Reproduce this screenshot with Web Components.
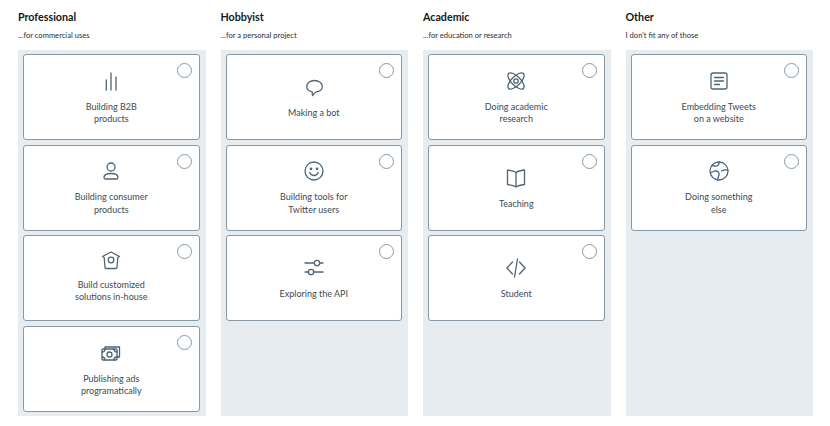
<!DOCTYPE html>
<html>
<head>
<meta charset="utf-8">
<title>Use cases</title>
<style>
  body { margin: 0; background: #fff; font-family: Lato, sans-serif; }
</style>
</head>
<body>
<template id="usecase-board-tpl">
  <style>
    :host { display: flex; gap: 15px; padding: 0 0 0 18px; width: 830px; height: 426px; box-sizing: border-box; }
  </style>
  <slot></slot>
</template>

<template id="usecase-column-tpl">
  <style>
    :host { display: flex; flex-direction: column; width: 187.5px; color: #14171a; }
    h2 { margin: 10px 0 0; font: 700 10.7px/14px Lato, sans-serif; color: #14171a; }
    p { margin: 5px 0 0; height: 21px; font: 400 7.6px/12px Lato, sans-serif; color: #292f33; }
    .panel { display: flex; flex-direction: column; gap: 4.67px; height: 366px; box-sizing: border-box; padding: 4px 6px 0 5px; background: #e6ecf0; }
  </style>
  <h2></h2>
  <p></p>
  <div class="panel"><slot></slot></div>
</template>

<template id="usecase-card-tpl">
  <style>
    :host { display: flex; flex-direction: column; align-items: center; justify-content: center; position: relative; height: 86px; box-sizing: border-box; padding-top: 1.5px; background: #fff; border: 1px solid #8899a6; border-radius: 3px; }
    :host([compact]) { padding-top: 0; padding-bottom: 4px; }
    :host([compact]) .label { margin-top: 7.5px; }
    .radio { position: absolute; top: 8px; right: 7px; width: 15px; height: 15px; box-sizing: border-box; border: 1px solid #8899a6; border-radius: 50%; background: #fff; }
    .icon { height: 22px; display: flex; align-items: center; justify-content: center; }
    .label { margin-top: 9px; font: 400 9px/12.5px Lato, sans-serif; color: #3d4a54; text-align: center; }
  </style>
  <span class="radio"></span>
  <div class="icon"><slot name="icon"></slot></div>
  <div class="label"><slot></slot></div>
</template>

<template id="usecase-icon-tpl">
  <style>
    :host { display: block; width: 22px; height: 22px; }
    svg { display: block; width: 22px; height: 22px; fill: none; stroke: #4f6475; stroke-width: 1.3; stroke-linecap: round; stroke-linejoin: round; }
  </style>
  <svg viewBox="0 0 22 22"></svg>
</template>

<usecase-board>
  <usecase-column heading="Professional" sub="...for commercial uses">
    <usecase-card><usecase-icon slot="icon" name="bars"></usecase-icon>Building B2B<br>products</usecase-card>
    <usecase-card><usecase-icon slot="icon" name="person"></usecase-icon>Building consumer<br>products</usecase-card>
    <usecase-card compact><usecase-icon slot="icon" name="house"></usecase-icon>Build customized<br>solutions in-house</usecase-card>
    <usecase-card><usecase-icon slot="icon" name="money"></usecase-icon>Publishing ads<br>programatically</usecase-card>
  </usecase-column>
  <usecase-column heading="Hobbyist" sub="...for a personal project">
    <usecase-card><usecase-icon slot="icon" name="bubble"></usecase-icon>Making a bot</usecase-card>
    <usecase-card><usecase-icon slot="icon" name="smile"></usecase-icon>Building tools for<br>Twitter users</usecase-card>
    <usecase-card><usecase-icon slot="icon" name="sliders"></usecase-icon>Exploring the API</usecase-card>
  </usecase-column>
  <usecase-column heading="Academic" sub="...for education or research">
    <usecase-card><usecase-icon slot="icon" name="atom"></usecase-icon>Doing academic<br>research</usecase-card>
    <usecase-card><usecase-icon slot="icon" name="book"></usecase-icon>Teaching</usecase-card>
    <usecase-card><usecase-icon slot="icon" name="code"></usecase-icon>Student</usecase-card>
  </usecase-column>
  <usecase-column heading="Other" sub="I don't fit any of those">
    <usecase-card><usecase-icon slot="icon" name="doc"></usecase-icon>Embedding Tweets<br>on a website</usecase-card>
    <usecase-card><usecase-icon slot="icon" name="globe"></usecase-icon>Doing something<br>else</usecase-card>
  </usecase-column>
</usecase-board>

<script>
const ICONS = {
  bars: '<path d="M6.300 10v10M11 3v17M16 7v13"/>',
  person: '<circle cx="11" cy="7" r="4"/><path d="M4 17.500c0-2.500 3-4 7-4s7 1.500 7 4c0 1-.8 1.500-1.500 1.500h-11C4.800 19 4 18.500 4 17.500z"/>',
  house: '<path d="M11 3 19.500 7.500 17.800 8.500 17 18.500c0 .6-.5 1-1 1H6c-.5 0-1-.4-1-1L4.200 8.500 2.500 7.500z"/><circle cx="11" cy="11" r="2.800"/>',
  money: '<rect x="2" y="7" width="15" height="11" rx="1"/><path d="M5 7V5h14.500v10H17"/><circle cx="9.500" cy="12.500" r="2.500"/><path d="M2 10c1.500 0 3-1 3-3M14 7c0 2 1.500 3 3 3M2 15c1.500 0 3 1 3 3M14 18c0-2 1.500-3 3-3"/>',
  bubble: '<path d="M11.500 4.500c4.500 0 7.800 2.500 7.800 5.800 0 3.200-2.800 5.300-6 5.600-1.200.3-2.600 2.200-3.800 3.600-.2-1.200-.3-2.500-.3-3.700-3.200-.6-5.500-2.800-5.500-5.500 0-3.300 3.300-5.800 7.800-5.800z"/>',
  smile: '<circle cx="11" cy="11" r="9"/><circle cx="8" cy="8.800" r=".7"/><circle cx="14" cy="8.800" r=".7"/><path d="M6.800 12.500c.8 2 2.400 3 4.200 3s3.400-1 4.200-3"/>',
  sliders: '<path d="M2 6h9.300M16.700 6H20M2 15h3.300M10.700 15H20"/><circle cx="14" cy="6" r="2.700"/><circle cx="8" cy="15" r="2.700"/>',
  atom: '<ellipse cx="11" cy="11" rx="10.500" ry="4.500" transform="rotate(45 11 11)"/><ellipse cx="11" cy="11" rx="10.500" ry="4.500" transform="rotate(-45 11 11)"/><circle cx="11" cy="11" r="2.200"/>',
  book: '<path d="M11 5.500C9 4 6 3.500 2.500 3v14.500c3.500.4 6.500 1 8.500 2.500 2-1.500 5-2.100 8.500-2.500V3C16 3.500 13 4 11 5.500zM11 5.500V20"/>',
  code: '<path d="M7.500 5 2 11l5.500 6M14.500 5 20 11l-5.500 6M12.500 2 9.500 20"/>',
  doc: '<rect x="3" y="3" width="16" height="16" rx="2"/><path d="M6.500 7.500h9M6.500 11h9M6.500 14.500h5"/>',
  globe: '<circle cx="11" cy="11" r="9"/><path d="M4 5.500c2 .5 3.500 1 5 .5 1-.5 2-2 2.500-4M3 12.500c2-.5 3.500-2 5.500-1.500 2 .5 3 2.500 2.500 4-.3 1-1 2.500-1.500 5M13.500 11c1.500-1 3.500-1.500 6.500-1"/>'
};

function fromTemplate(host, id) {
  const shadow = host.attachShadow({mode: "open"});
  shadow.appendChild(document.getElementById(id).content.cloneNode(true));
  return shadow;
}

class UsecaseBoard extends HTMLElement {
  constructor() {
    super();
    fromTemplate(this, "usecase-board-tpl");
  }
}

class UsecaseColumn extends HTMLElement {
  constructor() {
    super();
    this.shadowDOM = fromTemplate(this, "usecase-column-tpl");
  }
  connectedCallback() {
    this.shadowDOM.querySelector("h2").textContent = this.getAttribute("heading");
    this.shadowDOM.querySelector("p").textContent = this.getAttribute("sub");
  }
}

class UsecaseCard extends HTMLElement {
  constructor() {
    super();
    fromTemplate(this, "usecase-card-tpl");
  }
}

class UsecaseIcon extends HTMLElement {
  constructor() {
    super();
    this.shadowDOM = fromTemplate(this, "usecase-icon-tpl");
  }
  connectedCallback() {
    this.shadowDOM.querySelector("svg").innerHTML = ICONS[this.getAttribute("name")];
  }
}

customElements.define("usecase-board", UsecaseBoard);
customElements.define("usecase-column", UsecaseColumn);
customElements.define("usecase-card", UsecaseCard);
customElements.define("usecase-icon", UsecaseIcon);
</script>
</body>
</html>
